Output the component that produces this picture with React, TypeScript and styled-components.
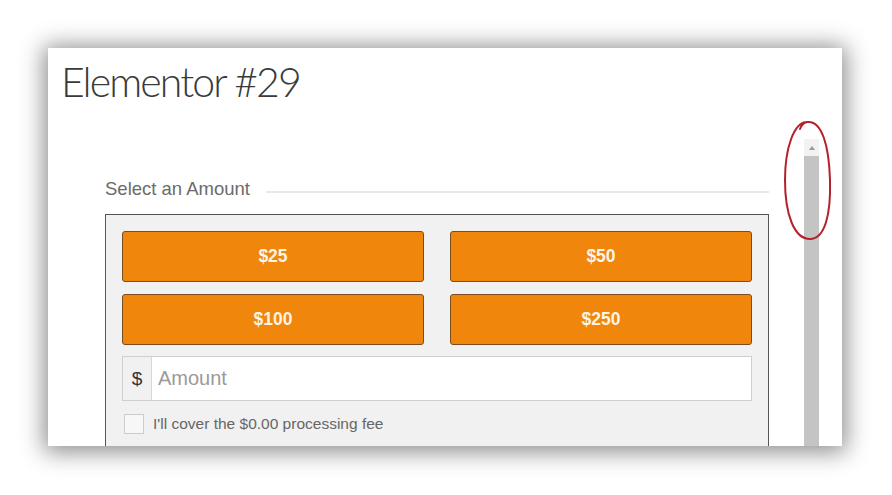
import styled, { createGlobalStyle } from 'styled-components';

const GlobalStyle = createGlobalStyle`
  html, body {
    margin: 0;
    padding: 0;
    background: #ffffff;
  }
  body {
    font-family: "Liberation Sans", Arial, sans-serif;
  }
`;

const Page = styled.div`
  position: relative;
  width: 892px;
  height: 495px;
  padding: 48px 50px 0 48px;
  box-sizing: border-box;
  overflow: hidden;
`;

const Shot = styled.div`
  display: flex;
  width: 794px;
  height: 398px;
  background: #ffffff;
  box-shadow: 0 2px 22px 4px rgba(0, 0, 0, 0.45);
  overflow: hidden;
`;

const Main = styled.div`
  flex: 1;
  display: flex;
  flex-direction: column;
`;

const Title = styled.h1`
  margin: 8px 0 0 13px;
  font-family: Lato, "Open Sans", sans-serif;
  font-weight: 300;
  font-size: 41px;
  line-height: 52px;
  letter-spacing: -1.9px;
  color: #3a3a3a;
`;

const Form = styled.div`
  margin: 65px 0 0 57px;
  width: 664px;
`;

const Legend = styled.div`
  display: flex;
  align-items: center;
  gap: 16px;
  height: 32px;
  font-size: 18.5px;
  color: #6b6b6b;
  &::after {
    content: '';
    flex: 1;
    height: 2px;
    margin-top: 6px;
    background: #e8e8e8;
  }
`;

const Box = styled.div`
  margin-top: 9px;
  border: 1px solid #555;
  background: #f1f1f1;
  padding: 16px 16px 30px;
`;

const Amounts = styled.div`
  display: grid;
  grid-template-columns: 1fr 1fr;
  column-gap: 26px;
  row-gap: 12px;
`;

const AmountButton = styled.button`
  height: 51px;
  border: 1px solid #7a4d1e;
  border-radius: 3px;
  background: #f0870c;
  color: #fdf3e6;
  font-family: "Liberation Sans", Arial, sans-serif;
  font-weight: 700;
  font-size: 17.5px;
  cursor: pointer;
`;

const InputRow = styled.div`
  display: flex;
  margin-top: 11px;
  height: 45px;
  border: 1px solid #cfcfcf;
  background: #ffffff;
  box-sizing: border-box;
`;

const Addon = styled.span`
  display: flex;
  align-items: center;
  justify-content: center;
  width: 28px;
  background: #f1f1f1;
  border-right: 1px solid #d6d6d6;
  font-size: 19px;
  color: #333;
`;

const AmountInput = styled.input`
  flex: 1;
  border: none;
  outline: none;
  padding: 0 6px;
  font-family: "Liberation Sans", Arial, sans-serif;
  font-size: 20px;
  color: #333;
  background: transparent;
  &::placeholder {
    color: #9a9a9a;
  }
`;

const FeeRow = styled.label`
  display: flex;
  align-items: center;
  gap: 9px;
  margin: 13px 0 0 2px;
  font-size: 15.5px;
  color: #666;
`;

const Check = styled.span`
  width: 18px;
  height: 18px;
  border: 1px solid #cccccc;
  background: #f7f7f7;
`;

const Scrollbar = styled.div`
  display: flex;
  flex-direction: column;
  width: 15px;
  margin: 91px 23px 0 0;
`;

const ScrollArrow = styled.div`
  display: flex;
  align-items: center;
  justify-content: center;
  height: 17px;
  background: #f2f2f2;
  &::before {
    content: '';
    border-left: 3px solid transparent;
    border-right: 3px solid transparent;
    border-bottom: 4px solid #9a9a9a;
  }
`;

const ScrollTrack = styled.div`
  flex: 1;
  background: #c4c4c4;
`;

const Annotation = styled.svg`
  position: absolute;
  left: 780px;
  top: 118px;
  pointer-events: none;
`;

const amounts = ['$25', '$50', '$100', '$250'];

export default function App() {
  return (
    <>
      <GlobalStyle />
      <Page>
        <Shot>
          <Main>
            <Title>Elementor #29</Title>
            <Form>
              <Legend>Select an Amount</Legend>
              <Box>
                <Amounts>
                  {amounts.map((a) => (
                    <AmountButton key={a}>{a}</AmountButton>
                  ))}
                </Amounts>
                <InputRow>
                  <Addon>$</Addon>
                  <AmountInput placeholder="Amount" />
                </InputRow>
                <FeeRow>
                  <Check />
                  I'll cover the $0.00 processing fee
                </FeeRow>
              </Box>
            </Form>
          </Main>
          <Scrollbar>
            <ScrollArrow />
            <ScrollTrack />
          </Scrollbar>
        </Shot>
        <Annotation width="56" height="126" viewBox="0 0 56 126">
          <path
            d="M27 4 C14 4 5 30 5 62 C5 96 14 121 30 121 C45 121 51 96 50 62 C49 28 42 2 27 4 C23 5 21 8 20 11"
            fill="none"
            stroke="#b3222a"
            strokeWidth="2"
            strokeLinecap="round"
          />
        </Annotation>
      </Page>
    </>
  );
}
